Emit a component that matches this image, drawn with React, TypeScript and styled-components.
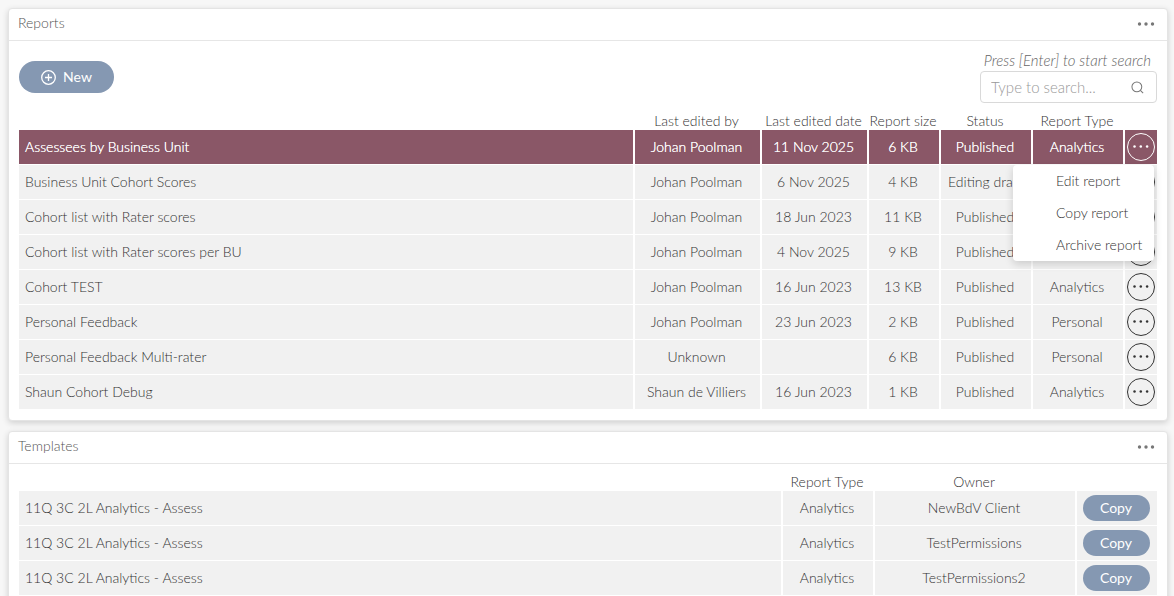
import React from "react";
import styled, { createGlobalStyle, css } from "styled-components";

const GlobalStyle = createGlobalStyle`
  * { box-sizing: border-box; }
  body {
    margin: 0;
    height: 100vh;
    overflow: hidden;
    background: #f7f7f7;
    color: #333;
    font: 300 14px/20px Lato, "Liberation Sans", sans-serif;
  }
  button, input { font: inherit; color: inherit; }
`;

const Page = styled.main`
  display: flex;
  flex-direction: column;
  gap: 10px;
  padding: 8px 6px 8px 8px;
`;

const Card = styled.section`
  background: #fff;
  border: 1px solid #e4e4e4;
  border-radius: 4px;
  box-shadow: 0 2px 6px rgba(0, 0, 0, 0.16);
`;

const CardHeader = styled.header`
  display: flex;
  align-items: center;
  justify-content: space-between;
  height: 32px;
  padding: 0 12px 4px 9px;
  border-bottom: 1px solid #e6e6e6;
`;

const CardTitle = styled.h2`
  margin: 0;
  font-size: 14px;
  font-weight: 300;
  line-height: 20px;
  color: #555;
`;

const HeaderMenu = styled.button`
  display: flex;
  padding: 2px 0 0;
  border: 0;
  background: none;
  color: #777;
`;

const CardBody = styled.div`
  padding: 10px;
`;

const Toolbar = styled.div`
  display: flex;
  align-items: center;
  justify-content: space-between;
  height: 52px;
  margin-bottom: 10px;
`;

const PillButton = styled.button<{ $small?: boolean }>`
  display: inline-flex;
  align-items: center;
  justify-content: center;
  gap: 7px;
  padding: 0;
  border: 0;
  border-radius: 16px;
  background: #8598b2;
  color: #fff;
  font-weight: 400;
  vertical-align: middle;
  width: ${(p) => (p.$small ? "67px" : "95px")};
  height: ${(p) => (p.$small ? "26px" : "32px")};
`;

const Search = styled.div`
  display: flex;
  flex-direction: column;
  width: 177px;
  font-size: 15px;
`;

const SearchHint = styled.label`
  padding-right: 6px;
  line-height: 18px;
  margin-bottom: 2px;
  text-align: right;
  font-style: italic;
  white-space: nowrap;
  color: #666;
`;

const SearchBox = styled.div`
  display: flex;
  align-items: center;
  height: 32px;
  padding: 0 12px 0 10px;
  border: 1px solid #d9d9d9;
  border-radius: 4px;
`;

const SearchInput = styled.input`
  flex: 1;
  min-width: 0;
  padding: 0;
  border: 0;
  outline: 0;
  background: none;
  &::placeholder { color: #999; opacity: 1; }
`;

const Table = styled.table`
  width: 100%;
  table-layout: fixed;
  border-collapse: separate;
  border-spacing: 0;
`;

const HeadCell = styled.th<{ $width?: number }>`
  width: ${(p) => (p.$width ? `${p.$width}px` : "auto")};
  height: 17px;
  padding: 0 0 2px;
  font-weight: 300;
  line-height: 15px;
  text-align: center;
  white-space: nowrap;
`;

const Cell = styled.td<{ $kind?: "name" | "actions" }>`
  height: 35px;
  padding: 0 2px 0 0;
  background: #f1f1f1;
  border-bottom: 1px solid #fff;
  border-left: 2px solid #fff;
  text-align: center;
  white-space: nowrap;
  ${(p) => p.$kind === "name" && css`
    padding-left: 6px;
    border-left: 0;
    text-align: left;
  `}
  ${(p) => p.$kind === "actions" && css`
    padding: 0;
  `}
`;

const Row = styled.tr<{ $selected?: boolean }>`
  ${(p) => p.$selected && css`
    color: #fff;
    ${Cell} {
      background: #8a5767;
      text-shadow: 0 0 0 #fff;
    }
  `}
`;

const Actions = styled.div`
  position: relative;
  display: flex;
  justify-content: center;
`;

const RoundButton = styled.button`
  display: flex;
  align-items: center;
  justify-content: center;
  width: 28px;
  height: 28px;
  padding: 0;
  border: 1px solid currentColor;
  border-radius: 50%;
  background: none;
`;

const Menu = styled.div`
  position: absolute;
  top: 32px;
  right: 3px;
  z-index: 1;
  width: 141px;
  border-radius: 4px;
  background: #fff;
  color: #333;
  text-shadow: none;
  box-shadow: 0 3px 8px rgba(0, 0, 0, 0.16);
`;

const MenuItem = styled.button`
  display: block;
  width: 100%;
  height: 32px;
  padding: 0 0 0 43px;
  border: 0;
  background: none;
  text-align: left;
`;

const HeaderDots = () => (
  <svg width="18" height="4" viewBox="0 0 18 4" fill="currentColor" aria-hidden="true">
    <circle cx="2.5" cy="2" r="1.7" /><circle cx="9" cy="2" r="1.7" /><circle cx="15.5" cy="2" r="1.7" />
  </svg>
);

const RoundDots = () => (
  <svg width="18" height="4" viewBox="0 0 18 4" fill="currentColor" aria-hidden="true">
    <circle cx="2.5" cy="1.6" r="1.25" /><circle cx="8.8" cy="1.6" r="1.25" /><circle cx="15.1" cy="1.6" r="1.25" />
  </svg>
);

const PlusIcon = () => (
  <svg width="15" height="15" viewBox="0 0 15 15" fill="none" stroke="currentColor" strokeWidth="1.3" aria-hidden="true">
    <circle cx="7.5" cy="7.5" r="6.8" /><path d="M7.5 4v7M4 7.5h7" />
  </svg>
);

const SearchIcon = () => (
  <svg width="13" height="13" viewBox="0 0 14 14" fill="none" stroke="#777" strokeWidth="1.1" aria-hidden="true">
    <circle cx="6.3" cy="6.3" r="5.3" /><path d="M10.1 10.1l3 3" />
  </svg>
);

const reports = [
  ["Assessees by Business Unit", "Johan Poolman", "11 Nov 2025", "6 KB", "Published", "Analytics"],
  ["Business Unit Cohort Scores", "Johan Poolman", "6 Nov 2025", "4 KB", "Editing draft", "Analytics"],
  ["Cohort list with Rater scores", "Johan Poolman", "18 Jun 2023", "11 KB", "Published", "Analytics"],
  ["Cohort list with Rater scores per BU", "Johan Poolman", "4 Nov 2025", "9 KB", "Published", "Analytics"],
  ["Cohort TEST", "Johan Poolman", "16 Jun 2023", "13 KB", "Published", "Analytics"],
  ["Personal Feedback", "Johan Poolman", "23 Jun 2023", "2 KB", "Published", "Personal"],
  ["Personal Feedback Multi-rater", "Unknown", "", "6 KB", "Published", "Personal"],
  ["Shaun Cohort Debug", "Shaun de Villiers", "16 Jun 2023", "1 KB", "Published", "Analytics"],
];

const templates = [
  ["11Q 3C 2L Analytics - Assess", "Analytics", "NewBdV Client"],
  ["11Q 3C 2L Analytics - Assess", "Analytics", "TestPermissions"],
  ["11Q 3C 2L Analytics - Assess", "Analytics", "TestPermissions2"],
];

const Panel = ({ title, children }: { title: string; children: React.ReactNode }) => (
  <Card>
    <CardHeader>
      <CardTitle>{title}</CardTitle>
      <HeaderMenu type="button" aria-label={`${title} options`}><HeaderDots /></HeaderMenu>
    </CardHeader>
    <CardBody>{children}</CardBody>
  </Card>
);

export default function App() {
  return (
    <>
      <GlobalStyle />
      <Page>
        <Panel title="Reports">
          <Toolbar>
            <PillButton type="button"><PlusIcon />New</PillButton>
            <Search>
              <SearchHint htmlFor="search">Press [Enter] to start search</SearchHint>
              <SearchBox>
                <SearchInput id="search" type="text" placeholder="Type to search..." />
                <SearchIcon />
              </SearchBox>
            </Search>
          </Toolbar>
          <Table>
            <thead>
              <tr>
                <HeadCell />
                <HeadCell $width={127}>Last edited by</HeadCell>
                <HeadCell $width={107}>Last edited date</HeadCell>
                <HeadCell $width={72}>Report size</HeadCell>
                <HeadCell $width={92}>Status</HeadCell>
                <HeadCell $width={92}>Report Type</HeadCell>
                <HeadCell $width={34} />
              </tr>
            </thead>
            <tbody>
              {reports.map((report, i) => (
                <Row key={report[0]} $selected={i === 0}>
                  {report.map((value, j) => <Cell key={j} $kind={j === 0 ? "name" : undefined}>{value}</Cell>)}
                  <Cell $kind="actions">
                    <Actions>
                      <RoundButton type="button" aria-label={`Actions for ${report[0]}`}><RoundDots /></RoundButton>
                      {i === 0 && (
                        <Menu>
                          <MenuItem type="button">Edit report</MenuItem>
                          <MenuItem type="button">Copy report</MenuItem>
                          <MenuItem type="button">Archive report</MenuItem>
                        </Menu>
                      )}
                    </Actions>
                  </Cell>
                </Row>
              ))}
            </tbody>
          </Table>
        </Panel>
        <Panel title="Templates">
          <Table>
            <thead>
              <tr>
                <HeadCell />
                <HeadCell $width={92}>Report Type</HeadCell>
                <HeadCell $width={202}>Owner</HeadCell>
                <HeadCell $width={82} />
              </tr>
            </thead>
            <tbody>
              {templates.map((template, i) => (
                <Row key={i}>
                  {template.map((value, j) => <Cell key={j} $kind={j === 0 ? "name" : undefined}>{value}</Cell>)}
                  <Cell><PillButton type="button" $small>Copy</PillButton></Cell>
                </Row>
              ))}
            </tbody>
          </Table>
        </Panel>
      </Page>
    </>
  );
}
